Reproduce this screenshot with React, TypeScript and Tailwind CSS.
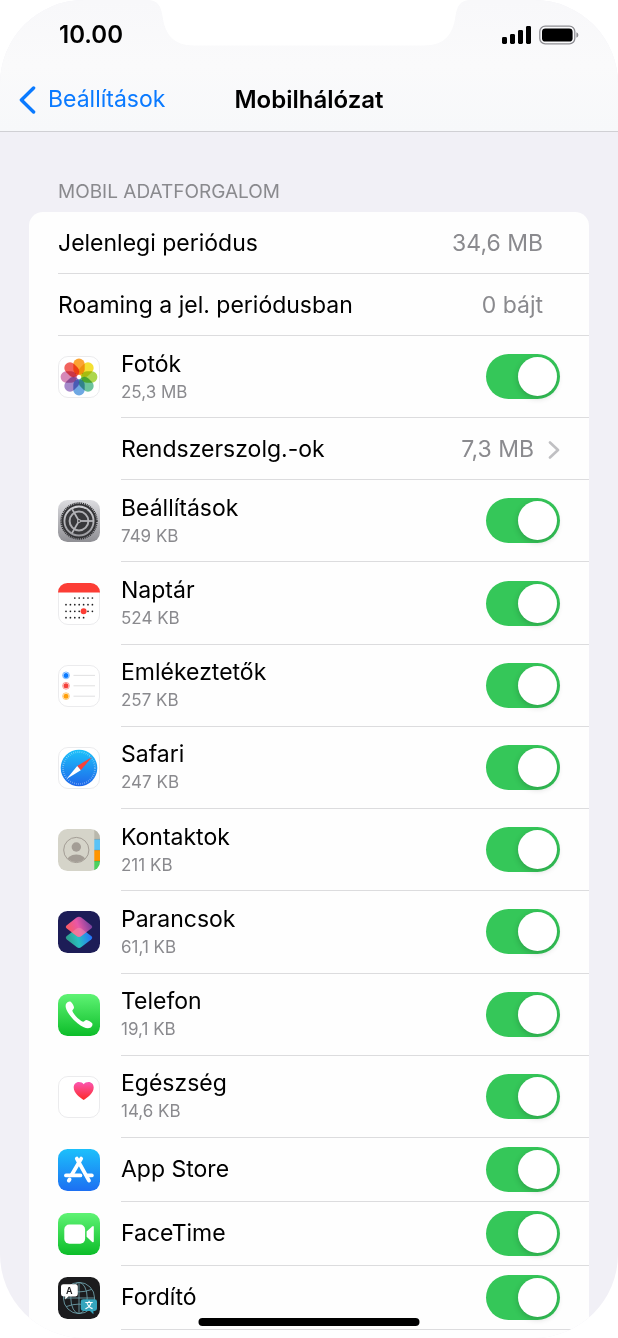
import React, { useState } from 'react';

interface AppEntry {
  id: string;
  name: string;
  usage?: string;
  icon: React.ReactNode;
}

const PETALS = ['#fb9a1c', '#f3dd1c', '#a4d23a', '#5cbd91', '#5f9fe0', '#9b7cc4', '#d27cb0', '#f0524c'];

const PhotosIcon = () => (
  <g>
    <Plate />
    <g style={{ isolation: 'isolate' }}>
      {PETALS.map((color, i) => (
        <rect
          key={color}
          x="15.3"
          y="2.6"
          width="11.4"
          height="16.4"
          rx="5.7"
          fill={color}
          fillOpacity="0.9"
          transform={`rotate(${i * 45} 21 21)`}
          className="mix-blend-multiply"
        />
      ))}
    </g>
    <circle cx="21" cy="21" r="1.1" fill="#fff" />
  </g>
);

const SettingsIcon = () => (
  <g>
    <defs>
      <linearGradient id="settingsBg" x1="0" y1="0" x2="0" y2="1">
        <stop offset="0" stopColor="#dcdce0" />
        <stop offset="1" stopColor="#8f8f94" />
      </linearGradient>
    </defs>
    <rect width="42" height="42" rx="9.5" fill="url(#settingsBg)" />
    <circle cx="21" cy="21" r="17.8" fill="none" stroke="#333336" strokeWidth="1.8" strokeDasharray="1.1 0.8" />
    <circle cx="21" cy="21" r="16.4" fill="none" stroke="#333336" strokeWidth="1.8" />
    <circle cx="21" cy="21" r="13.6" fill="#38383b" />
    <circle cx="21" cy="21" r="9.4" fill="none" stroke="#aeaeb2" strokeWidth="2" />
    <g stroke="#b4b4b8" strokeWidth="1.8">
      <path d="M21 21H35" />
      <path d="M21 21L14 8.9" />
      <path d="M21 21L14 33.1" />
    </g>
    <circle cx="21" cy="21" r="2" fill="#b4b4b8" />
    <circle cx="21" cy="21" r="0.9" fill="#333336" />
  </g>
);

const CALENDAR_ROWS = [
  { y: 15, from: 2, to: 6 },
  { y: 21.7, from: 0, to: 6 },
  { y: 28.3, from: 0, to: 6 },
  { y: 34.7, from: 0, to: 4 },
];

const CalendarIcon = () => (
  <g>
    <Plate />
    <path d="M0 9.5A9.5 9.5 0 0 1 9.5 0H32.5A9.5 9.5 0 0 1 42 9.5Z" fill="#fc3d35" />
    {CALENDAR_ROWS.map(row =>
      Array.from({ length: row.to - row.from + 1 }).map((_, i) => (
        <circle key={`${row.y}-${i}`} cx={8 + (row.from + i) * 4.4} cy={row.y} r="0.85" fill="#1c1c1e" />
      ))
    )}
    <circle cx="25.6" cy="28.3" r="3" fill="#fc3d35" />
  </g>
);

const RemindersIcon = () => (
  <g>
    <Plate />
    {['#0a7aff', '#f5413a', '#ff9f0a'].map((color, i) => (
      <g key={color}>
        <circle cx="8" cy={10.4 + i * 10.4} r="3.4" fill="none" stroke={color} strokeOpacity="0.65" strokeWidth="0.8" />
        <circle cx="8" cy={10.4 + i * 10.4} r="2.5" fill={color} />
        <path d={`M15.5 ${10.4 + i * 10.4}H37`} stroke="#dcdcde" strokeWidth="0.9" />
      </g>
    ))}
  </g>
);

const SafariIcon = () => (
  <g>
    <defs>
      <linearGradient id="safariBg" x1="0" y1="0" x2="0" y2="1">
        <stop offset="0" stopColor="#1bc1fa" />
        <stop offset="1" stopColor="#1f67ea" />
      </linearGradient>
    </defs>
    <Plate />
    <circle cx="21" cy="21" r="18.3" fill="url(#safariBg)" />
    <circle cx="21" cy="21" r="16" fill="none" stroke="#fff" strokeOpacity="0.6" strokeWidth="1.8" strokeDasharray="0.5 1.6" />
    <path d="M34 10L19.2 19L22.8 23.2Z" fill="#f6423b" />
    <path d="M8.5 32L19.2 19L22.8 23.2Z" fill="#fff" />
  </g>
);

const ContactsIcon = () => (
  <g>
    <defs>
      <clipPath id="contactsPlate">
        <rect width="42" height="42" rx="9.5" />
      </clipPath>
      <clipPath id="contactsFace">
        <circle cx="18.3" cy="21" r="12" />
      </clipPath>
    </defs>
    <g clipPath="url(#contactsPlate)">
      <rect width="42" height="42" fill="#d5d4c9" />
      <rect x="36.3" width="6" height="10.4" fill="#b9b8ac" />
      <rect x="36.3" y="10.4" width="6" height="10.8" fill="#5ac3f7" />
      <rect x="36.3" y="21.2" width="6" height="10.8" fill="#ff9500" />
      <rect x="36.3" y="32" width="6" height="10" fill="#4cd15f" />
      <path d="M36.3 10.4H42M36.3 21.2H42M36.3 32H42" stroke="#000" strokeOpacity="0.18" strokeWidth="0.8" />
    </g>
    <g clipPath="url(#contactsFace)" fill="#a39d95">
      <circle cx="18.3" cy="18" r="4.7" />
      <ellipse cx="18.3" cy="32.6" rx="10" ry="7" />
    </g>
    <circle cx="18.3" cy="21" r="12.6" fill="none" stroke="#a39d95" strokeWidth="1" />
  </g>
);

const ShortcutsIcon = () => (
  <g>
    <defs>
      <linearGradient id="layerTop" x1="0" y1="0.7" x2="1" y2="0.4">
        <stop offset="0" stopColor="#fb5a57" />
        <stop offset="0.5" stopColor="#e858a8" />
        <stop offset="1" stopColor="#6e3f9c" />
      </linearGradient>
      <linearGradient id="layerBottom" x1="0" y1="0.6" x2="1" y2="0.4">
        <stop offset="0" stopColor="#2f9a86" />
        <stop offset="0.45" stopColor="#28bfc0" />
        <stop offset="1" stopColor="#2670ff" />
      </linearGradient>
    </defs>
    <rect width="42" height="42" rx="9.5" fill="#1d1d57" />
    <path d="M18.6 17.6Q21 15.8 23.4 17.6L33.2 25Q35.2 26.7 33.2 28.4L23.4 36Q21 37.8 18.6 36L8.8 28.4Q6.8 26.7 8.8 25Z" fill="url(#layerBottom)" />
    <path d="M18.6 6.6Q21 4.8 23.4 6.6L33.2 14.2Q35.2 15.9 33.2 17.6L23.4 25Q21 26.8 18.6 25L8.8 17.6Q6.8 15.9 8.8 14.2Z" fill="url(#layerTop)" />
    <path d="M18.6 17.6Q21 15.8 23.4 17.6L28.3 21.3L23.4 25Q21 26.8 18.6 25L13.7 21.3Z" fill="#f6a5ae" fillOpacity="0.4" />
  </g>
);

const PhoneIcon = () => (
  <g>
    <GreenPlate id="phoneBg" />
    <path
      d="M8.3 9.6C9.5 7.9 11.5 7 13 8C14.5 9.5 16 12 16 13.5C16 15 14.5 15.5 14.3 16.8C15.5 20.5 21.5 26.5 25 27.8C26.5 27.6 27 26 28.5 26C30.5 26.3 33 28 34.2 29.3C35 30.8 34 32.8 32.2 33.8C29.5 35 25 33.8 19.5 29.3C13 23.8 8.5 17.5 7.8 13.5C7.5 12 7.6 10.6 8.3 9.6Z"
      fill="#fff"
    />
  </g>
);

const HealthIcon = () => (
  <g>
    <defs>
      <linearGradient id="heart" x1="0" y1="0" x2="0" y2="1">
        <stop offset="0" stopColor="#fb56b2" />
        <stop offset="1" stopColor="#fd2a25" />
      </linearGradient>
    </defs>
    <Plate />
    <path
      d="M25.7 24C22 21.6 15.7 17.4 15.7 11.6C15.7 8.2 18 6 20.8 6C23 6 24.7 6.9 25.7 8.2C26.7 6.9 28.4 6 30.6 6C33.4 6 35.7 8.2 35.7 11.6C35.7 17.4 29.4 21.6 25.7 24Z"
      fill="url(#heart)"
    />
  </g>
);

const AppStoreIcon = () => (
  <g>
    <defs>
      <linearGradient id="storeBg" x1="0" y1="0" x2="0" y2="1">
        <stop offset="0" stopColor="#1cc0fb" />
        <stop offset="1" stopColor="#1d6ff2" />
      </linearGradient>
    </defs>
    <rect width="42" height="42" rx="9.5" fill="url(#storeBg)" />
    <g stroke="#fff" strokeWidth="3.8" strokeLinecap="round" fill="none">
      <path d="M23.2 9.6L13.6 26" />
      <path d="M11.6 30.4L10.8 31.6" />
      <path d="M18.8 9.6L31 31.6" />
      <path d="M8 26.4H22.4" />
      <path d="M29.4 26.4H33.8" />
    </g>
  </g>
);

const FaceTimeIcon = () => (
  <g>
    <GreenPlate id="faceTimeBg" />
    <rect x="6.3" y="11.6" width="20.8" height="19.2" rx="5" fill="#fff" />
    <path d="M28.6 18.6L34.2 13.4Q35.8 12.4 35.8 14.4V28Q35.8 30 34.2 29L28.6 23.8Z" fill="#fff" />
  </g>
);

const TranslateIcon = () => (
  <g>
    <rect width="42" height="42" rx="9.5" fill="#1c1c1e" />
    <g fill="none" stroke="#6b9ba5" strokeWidth="0.9">
      <circle cx="21" cy="21" r="15.6" />
      <ellipse cx="21" cy="21" rx="8.2" ry="15.6" />
      <path d="M21 5.4V36.6M5.4 21H36.6M8.2 12.4Q21 17.4 33.8 12.4M8.2 29.6Q21 24.6 33.8 29.6" />
    </g>
    <path d="M5.4 7.2H17.4Q19.8 7.2 19.8 9.6V17Q19.8 19.4 17.4 19.4H10.4L7.2 22.6V19.4H5.4Q3 19.4 3 17V9.6Q3 7.2 5.4 7.2Z" fill="#fff" />
    <path d="M25.2 22.2H36.6Q39 22.2 39 24.6V31.6Q39 34 36.6 34H35.4V37.2L32 34H25.2Q22.8 34 22.8 31.6V24.6Q22.8 22.2 25.2 22.2Z" fill="#35a5bd" />
    <text x="11.4" y="16.6" textAnchor="middle" fontSize="9" fontWeight="600" fill="#1c1c1e">
      A
    </text>
    <text x="30.9" y="31" textAnchor="middle" fontSize="8" fontWeight="700" fill="#fff">
      文
    </text>
  </g>
);

// White tile with a hairline edge
function Plate() {
  return <rect x="0.5" y="0.5" width="41" height="41" rx="9.5" fill="#fff" stroke="#e6e6e8" strokeWidth="0.8" />;
}

function GreenPlate({ id }: { id: string }) {
  return (
    <>
      <defs>
        <linearGradient id={id} x1="0" y1="0" x2="0" y2="1">
          <stop offset="0" stopColor="#5ff374" />
          <stop offset="1" stopColor="#0cbd29" />
        </linearGradient>
      </defs>
      <rect width="42" height="42" rx="9.5" fill={`url(#${id})`} />
    </>
  );
}

const PHOTOS: AppEntry = { id: 'photos', name: 'Fotók', usage: '25,3 MB', icon: <PhotosIcon /> };

const APPS: AppEntry[] = [
  { id: 'settings', name: 'Beállítások', usage: '749 KB', icon: <SettingsIcon /> },
  { id: 'calendar', name: 'Naptár', usage: '524 KB', icon: <CalendarIcon /> },
  { id: 'reminders', name: 'Emlékeztetők', usage: '257 KB', icon: <RemindersIcon /> },
  { id: 'safari', name: 'Safari', usage: '247 KB', icon: <SafariIcon /> },
  { id: 'contacts', name: 'Kontaktok', usage: '211 KB', icon: <ContactsIcon /> },
  { id: 'shortcuts', name: 'Parancsok', usage: '61,1 KB', icon: <ShortcutsIcon /> },
  { id: 'phone', name: 'Telefon', usage: '19,1 KB', icon: <PhoneIcon /> },
  { id: 'health', name: 'Egészség', usage: '14,6 KB', icon: <HealthIcon /> },
  { id: 'appstore', name: 'App Store', icon: <AppStoreIcon /> },
  { id: 'facetime', name: 'FaceTime', icon: <FaceTimeIcon /> },
  { id: 'translate', name: 'Fordító', icon: <TranslateIcon /> },
];

const AppRow: React.FC<{ app: AppEntry }> = ({ app }) => {
  const [enabled, setEnabled] = useState(true);

  return (
    <li className={`flex items-center pl-[29px] shrink-0 ${app.usage ? 'basis-[82px] grow' : 'basis-16'}`}>
      <svg viewBox="0 0 42 42" className="w-[42px] h-[42px] shrink-0" aria-hidden="true">
        {app.icon}
      </svg>
      <div className="ml-[21px] pr-[29px] flex-1 self-stretch flex items-center justify-between border-b border-[#dcdcde]">
        <label htmlFor={app.id} className="flex flex-col">
          <span className="text-[23px] leading-[30px]">{app.name}</span>
          {app.usage && <span className="text-[17px] leading-[26px] text-[#8a8a8e]">{app.usage}</span>}
        </label>
        <input
          id={app.id}
          type="checkbox"
          role="switch"
          checked={enabled}
          onChange={e => setEnabled(e.target.checked)}
          className="appearance-none shrink-0 w-[74px] h-[45px] p-[3px] rounded-full bg-[#e9e9ea] checked:bg-[#35c759] transition-colors before:block before:size-[39px] before:rounded-full before:bg-white before:shadow-[0_2px_6px_rgba(0,0,0,0.2)] checked:before:translate-x-[29px]"
        />
      </div>
    </li>
  );
};

const ValueRow: React.FC<{ label: string; value: string }> = ({ label, value }) => (
  <li className="ml-[29px] pt-0.5 pr-[46px] h-[62px] shrink-0 flex items-center justify-between border-b border-[#dcdcde] text-[23px]">
    <span>{label}</span>
    <span className="text-[#8a8a8e]">{value}</span>
  </li>
);

export default function App() {
  return (
    <div className="relative min-h-screen flex flex-col overflow-hidden rounded-[84px] bg-[#f1f0f6] text-black font-['Inter','Noto_Sans_CJK_SC',sans-serif]">
      <header className="bg-linear-to-b from-[#f8f8fa] via-[#fafafb] to-[#f7f8fa] border-b border-[#d0d0d4]">
        {/* Status bar */}
        <div className="h-[70px] pl-[59px] pr-[39px] flex items-center justify-between">
          <span className="text-[24px] font-semibold">10.00</span>
          <div className="flex items-center gap-[7px]">
            <svg viewBox="0 0 30 18" className="w-[30px] h-[18px]" aria-hidden="true">
              <rect x="0" y="11" width="5" height="7" rx="1.4" />
              <rect x="8" y="8" width="5" height="10" rx="1.4" />
              <rect x="16" y="4" width="5" height="14" rx="1.4" />
              <rect x="24" y="0" width="5" height="18" rx="1.4" />
            </svg>
            <svg viewBox="0 0 40 20" className="w-10 h-5" aria-hidden="true">
              <rect x="0.8" y="1.2" width="35" height="17.6" rx="5.4" fill="none" stroke="#8e8e93" strokeWidth="1.3" />
              <rect x="3" y="3.4" width="30.6" height="13.2" rx="3.4" />
              <path d="M37.4 7.2Q39.4 8 39.4 10T37.4 12.8Z" fill="#8e8e93" />
            </svg>
          </div>
        </div>

        {/* Navigation bar */}
        <nav className="h-[61px] pb-0.5 px-[19px] grid grid-cols-[1fr_auto_1fr] items-center">
          <a href="#settings" className="flex items-center gap-3 text-[23px] text-[#0a7aff]">
            <svg viewBox="0 0 17 28" className="w-[17px] h-7" fill="none" stroke="currentColor" strokeWidth="3.4" strokeLinecap="round" strokeLinejoin="round" aria-hidden="true">
              <path d="M14.6 2L2.4 14L14.6 26" />
            </svg>
            Beállítások
          </a>
          <h1 className="text-[24px] font-semibold">Mobilhálózat</h1>
        </nav>
      </header>

      {/* Sensor housing */}
      <svg viewBox="0 0 320 46" className="absolute top-0 left-1/2 -translate-x-1/2 w-80 h-[46px]" aria-hidden="true">
        <path d="M0 0C9 1 12 6 13.500 16C16 34 24 45.500 45 45.500H275C296 45.500 304 34 306.500 16C308 6 311 1 320 0Z" fill="#fff" />
      </svg>

      <main className="flex-1 flex flex-col px-[29px]">
        <h2 className="pt-[46px] pb-[6px] pl-[29px] text-[19px] leading-7 text-[#8a8a8e] uppercase">Mobil adatforgalom</h2>
        <ul className="flex-1 flex flex-col pb-2 rounded-t-[14px] bg-[#fefefe]">
          <ValueRow label="Jelenlegi periódus" value="34,6 MB" />
          <ValueRow label="Roaming a jel. periódusban" value="0 bájt" />
          <AppRow app={PHOTOS} />
          <li className="shrink-0">
            <a href="#system-services" className="ml-[92px] pt-0.5 pr-[29px] h-[62px] flex items-center border-b border-[#dcdcde] text-[23px]">
              <span className="flex-1">Rendszerszolg.-ok</span>
              <span className="text-[#8a8a8e]">7,3 MB</span>
              <svg viewBox="0 0 12 18" className="ml-[14px] w-3 h-[18px]" fill="none" stroke="#c0c0c3" strokeWidth="2.6" strokeLinecap="round" strokeLinejoin="round" aria-hidden="true">
                <path d="M2 1.500L10 9L2 16.500" />
              </svg>
            </a>
          </li>
          {APPS.map(app => (
            <AppRow key={app.id} app={app} />
          ))}
        </ul>
      </main>

      {/* Home indicator */}
      <div className="absolute bottom-3 left-1/2 -translate-x-1/2 w-[221px] h-2 rounded-full bg-black" />
    </div>
  );
}
